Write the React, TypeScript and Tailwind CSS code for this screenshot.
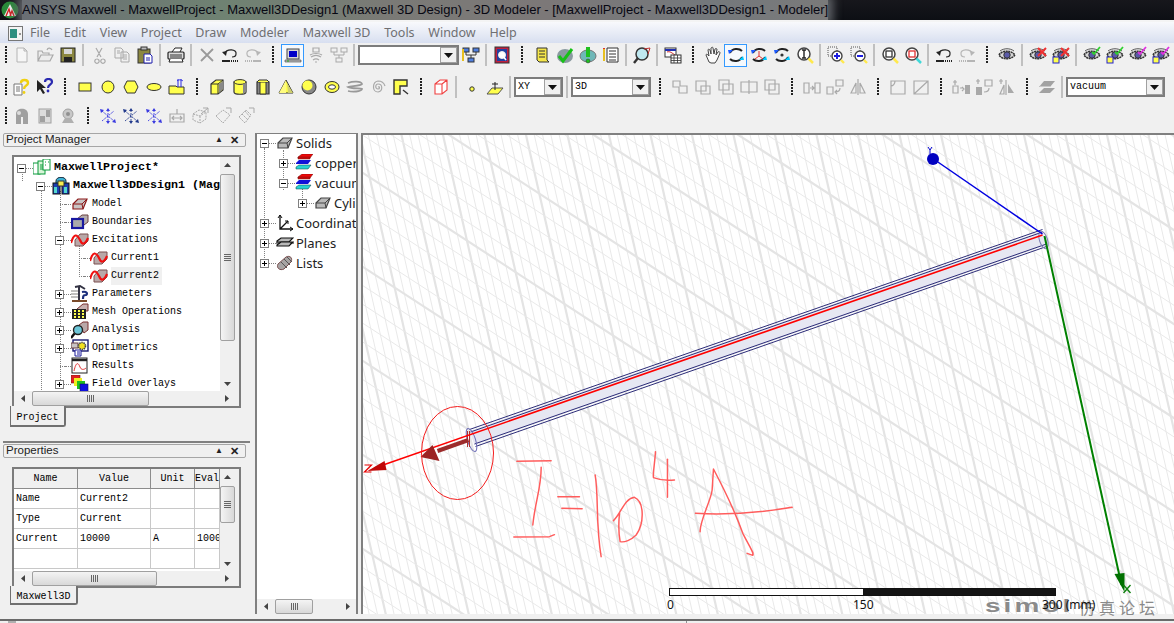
import type { ReactNode } from "react";

const G = "#a9a9a9";
const Y = "#ffff4d";

function Ic({ children, s = 18 }: { children: ReactNode; s?: number }) {
  return (
    <svg width={s} height={s} viewBox="0 0 18 18" fill="none" className="shrink-0">
      {children}
    </svg>
  );
}

const Eye = ({ x = 0 }: { x?: number }) => (
  <g transform={`translate(${x} 0)`}>
    <path d="M1 9 C4 4 13 4 17 9 C13 14 4 14 1 9Z" fill="#d8d8d8" stroke="#333" strokeWidth="1.6" strokeDasharray="2 .6" />
    <circle cx="9" cy="9" r="3.2" fill="#5b5ba8" stroke="#333" />
    <path d="M2 5 C6 2 12 2 16 5" stroke="#555" />
  </g>
);
const Rot = ({ head = "#00c8ff", mid }: { head?: string; mid?: ReactNode }) => (
  <>
    <path d="M3 7 C5 2 12 2 15 5" stroke="#222" strokeWidth="2" />
    <path d="M15 11 C13 16 6 16 3 13" stroke="#222" strokeWidth="2" />
    <path d="M1 4 L6 4 L2 8Z" fill="#1c5bff" />
    <path d="M17 14 L12 14 L16 10Z" fill={head} />
    {mid}
  </>
);
const Mag = ({ inner, handle = "#ffe94d" }: { inner: ReactNode; handle?: string }) => (
  <>
    <circle cx="8" cy="8" r="6" fill="#fff" stroke="#444" strokeWidth="1.5" />
    {inner}
    <path d="M12.5 12.5 L17 17" stroke={handle} strokeWidth="2.5" />
  </>
);
const Dot = () => <rect x="1" y="1" width="9" height="9" stroke="#555" strokeDasharray="1 1" />;
const Check = ({ c }: { c: string }) => <path d="M9 6 L11 8 L17 1" stroke={c} strokeWidth="1.8" />;
const MiniBox = () => <rect x="1" y="11" width="6" height="6" fill={Y} stroke="#2222cc" />;
const Xr = () => <path d="M9 2 L17 10 M17 2 L9 10" stroke="#f03030" strokeWidth="2" />;
const Undo = ({ c, flip }: { c: string; flip?: boolean }) => (
  <g transform={flip ? "translate(18 0) scale(-1 1)" : undefined}>
    <path d="M3 8 C6 2 16 3 15 8 C15 10 13 11 11 11" stroke={c} strokeWidth="1.2" />
    <path d="M1 6 L6 5 L5 10Z" fill={c} />
    <path d="M1 15 H9" stroke={c} strokeWidth="2" />
    <path d="M10 15 H17" stroke={c} strokeWidth="2" strokeDasharray="1 1" />
  </g>
);
const Hier = ({ c, fill }: { c: string; fill: string }) => (
  <>
    <rect x="1" y="2" width="6" height="4" fill={fill} stroke={c} />
    <rect x="11" y="2" width="6" height="4" fill={fill} stroke={c} />
    <rect x="6" y="12" width="6" height="4" fill={fill} stroke={c} />
    <path d="M4 6 V9 H14 V6 M9 9 V12" stroke={c} />
  </>
);
const GSq = ({ d }: { d: string }) => <path d={d} stroke={G} strokeWidth="1.2" fill="none" />;
const Arrows = ({ c = "#3a3ae0" }: { c?: string }) => (
  <>
    <path d="M3 4 L15 14 M9 3 V15 M3 14 L15 4" stroke={c} strokeWidth=".9" strokeDasharray="2 1" />
    <path d="M1 2 L5 3 L2 6Z M17 16 L13 15 L16 12Z M9 1 L11 4 H7Z M9 17 L11 14 H7Z" fill={c} />
  </>
);
const GBox = () => <path d="M2 7 L8 3 L15 5 V12 L9 16 L2 13Z M2 7 L9 9 L15 5 M9 9 V16" stroke={G} strokeDasharray="2 1" />;

const TOOL: Record<string, ReactNode> = {
  new: <path d="M4 2 H11 L14 5 V16 H4Z M11 2 V5 H14" stroke="#b4b4b4" fill="#f6f6f6" />,
  open: <path d="M2 15 V5 H6 L7 7 H13 V9 M2 15 L5 9 H17 L14 15Z M11 4 C12 1 15 2 16 4" stroke={G} strokeWidth="1.2" fill="#ececec" />,
  save: (
    <>
      <rect x="2" y="2" width="14" height="14" fill="#8b8740" stroke="#222" />
      <rect x="5" y="3" width="8" height="5" fill="#d8d8d8" />
      <rect x="5" y="11" width="8" height="5" fill="#222" />
    </>
  ),
  cut: <path d="M6 2 L11 11 M12 2 L7 11 M7 13 A2.2 2.2 0 1 1 6.9 13 M13 13 A2.2 2.2 0 1 1 12.9 13" stroke={G} strokeWidth="1.2" />,
  copy: <path d="M2 2 H8 L10 4 V12 H2Z M8 6 H14 L16 8 V16 H8Z M4 5 H7 M4 7 H7 M10 9 H14 M10 11 H14 M10 13 H14" stroke={G} fill="#f0f0f0" />,
  paste: (
    <>
      <rect x="2" y="3" width="12" height="14" fill="#8b8740" stroke="#333" />
      <rect x="5" y="1" width="6" height="3" fill="#bbb" stroke="#333" />
      <path d="M8 8 H14 L16 10 V17 H8Z" fill="#fff" stroke="#1f1fb0" />
      <path d="M10 12 H14 M10 14 H14" stroke="#1f1fb0" />
    </>
  ),
  print: (
    <>
      <path d="M5 6 L8 2 H15 L13 6" fill="#fff" stroke="#222" />
      <rect x="1" y="6" width="16" height="7" rx="1" fill="#ddd" stroke="#222" strokeWidth="1.2" />
      <path d="M3 9 H15 M3 11 H15" stroke="#333" />
      <path d="M3 13 L2 16 H16 L15 13" fill="#fff" stroke="#222" />
    </>
  ),
  del: <path d="M3 3 L15 15 M15 3 L3 15" stroke="#9a9a9a" strokeWidth="1.8" />,
  undo: <Undo c="#222" />,
  redo: <Undo c="#b5b5b5" flip />,
  monitor: (
    <>
      <rect x="3" y="3" width="12" height="10" fill="#d8d8d8" stroke="#444" />
      <rect x="5" y="5" width="8" height="6" fill="#0000c8" />
      <path d="M1 14 H17 V16 H1Z" fill="#bbb" stroke="#444" strokeWidth=".6" />
      <path d="M3 15 H5" stroke="#22aa22" />
    </>
  ),
  stack: <path d="M6 2 H12 V6 H6Z M3 9 C6 7 12 7 15 9 M4 11 C7 9 11 9 14 11 M6 14 C8 12.5 10 12.5 12 14 M8 16 H10" stroke={G} strokeWidth="1.2" />,
  hierG: <Hier c={G} fill="#f0f0f0" />,
  hierC: (
    <>
      <Hier c="#333" fill="#4f7fe0" />
      <path d="M1 3 V15" stroke="#e8c020" strokeWidth="2" />
    </>
  ),
  q: (
    <>
      <rect x="2" y="1" width="14" height="16" fill="#c02040" stroke="#333" />
      <rect x="4" y="3" width="10" height="12" fill="#2040a0" />
      <circle cx="9" cy="9" r="3.5" fill="#fff" stroke="#eee" />
      <path d="M10 10 L13 14" stroke="#fff" strokeWidth="1.5" />
    </>
  ),
  scroll: <path d="M4 2 H14 V14 L16 16 H6 L4 14Z M6 5 H12 M6 8 H12 M6 11 H12" stroke="#333" fill="#f5e64a" />,
  okG: (
    <>
      <ellipse cx="9" cy="10" rx="8" ry="7" fill="#8a9aa0" />
      <path d="M3 10 L7 15 L16 3" stroke="#18c018" strokeWidth="3" />
    </>
  ),
  warn: (
    <>
      <ellipse cx="9" cy="10" rx="8" ry="6" fill="#6fb8b8" stroke="#777" />
      <path d="M9 1 V11" stroke="#20c020" strokeWidth="4" />
      <circle cx="9" cy="15" r="2" fill="#20c020" stroke="#333" strokeWidth=".5" />
    </>
  ),
  docP: (
    <>
      <path d="M5 2 H16 V16 H5Z M7 5 H14 M7 8 H14 M7 11 H14 M7 14 H14" stroke="#333" fill="#fff" />
      <path d="M2 3 V15" stroke="#e8c020" strokeWidth="2" />
      <path d="M2 2 V3" stroke="#e03030" strokeWidth="2" />
    </>
  ),
  magCheck: (
    <>
      <circle cx="9" cy="8" r="6" fill="#bfe8f0" stroke="#333" strokeWidth="1.5" />
      <path d="M5 12 L1 17" stroke="#333" strokeWidth="2.4" />
      <path d="M11 3 L17 2 L15 8" stroke="#c03030" />
    </>
  ),
  sheet: (
    <>
      <rect x="1" y="2" width="11" height="9" fill="#fff" stroke="#333" />
      <path d="M1 4 H12" stroke="#2030b0" strokeWidth="2" />
      <path d="M3 6 C6 5 8 7 11 9" stroke="#d03030" />
      <rect x="7" y="9" width="10" height="8" fill="#fff" stroke="#333" />
      <path d="M7 12 H17 M7 14.5 H17 M10 9 V17 M13.5 9 V17" stroke="#333" strokeWidth=".8" />
    </>
  ),
  hand: <path d="M5 16 L2 9 C2 8 3 8 4 9 L5 10 L4 4 C4 3 5 3 6 4 L7 8 L7 2 C8 1 9 1 9 2 L10 8 L11 3 C12 2 13 3 13 3 L12 9 L14 6 C15 5 16 6 16 7 L13 14 L11 17 H7Z" stroke="#444" fill="#fafafa" />,
  rot: <Rot />,
  rotA: <Rot mid={<path d="M9 5 V10 M9 10 L5 13 M9 10 L13 13" stroke="#e03030" />} />,
  rotB: <Rot mid={<circle cx="9" cy="9" r="1.6" fill="#333" />} />,
  magI: <Mag inner={<path d="M8 4 V12 M6 4 H10 M6 12 H10" stroke="#222" strokeWidth="1.4" />} />,
  zoomIn: (
    <>
      <Dot />
      <circle cx="10" cy="10" r="5" fill="#fff" stroke="#444" strokeWidth="1.4" />
      <path d="M7 10 H13 M10 7 V13" stroke="#1c1ce0" strokeWidth="2" />
      <path d="M14 14 L17 17" stroke="#ffe94d" strokeWidth="2.4" />
    </>
  ),
  zoomOut: (
    <>
      <Dot />
      <circle cx="10" cy="10" r="5" fill="#fff" stroke="#444" strokeWidth="1.4" />
      <path d="M7 10 H13" stroke="#1c1ce0" strokeWidth="2" />
      <path d="M14 14 L17 17" stroke="#ffe94d" strokeWidth="2.4" />
    </>
  ),
  magS: <Mag inner={<rect x="5" y="5" width="6" height="6" stroke="#333" strokeWidth="1.3" />} />,
  magR: <Mag handle="#40d8d8" inner={<rect x="5" y="5" width="6" height="6" stroke="#e03030" strokeWidth="1.3" />} />,
  eye: <Eye />,
  eyeX: (
    <>
      <Eye />
      <Xr />
    </>
  ),
  eyeXB: (
    <>
      <Eye />
      <Xr />
      <MiniBox />
    </>
  ),
  eyeG: (
    <>
      <Eye />
      <Check c="#30d030" />
    </>
  ),
  eyeGB: (
    <>
      <Eye />
      <Check c="#30d030" />
      <MiniBox />
    </>
  ),
  eyeM: (
    <>
      <Eye />
      <Check c="#e030e0" />
    </>
  ),
  eyeMB: (
    <>
      <Eye />
      <Check c="#e030e0" />
      <MiniBox />
    </>
  ),
  help: (
    <>
      <path d="M1 6 H9 V17 H1Z M3 9 H7 M3 11 H7 M3 13 H7" stroke="#777" fill="#fff" />
      <path d="M8 5 C8 1 15 1 15 5 C15 8 11 7 11 11" stroke="#f0d010" strokeWidth="2.4" />
      <circle cx="11" cy="14.5" r="1.4" fill="#f0d010" />
    </>
  ),
  whats: (
    <>
      <path d="M1 2 V14 L4 11 L7 16 L9 15 L6 10 H10Z" fill="#222" />
      <path d="M9 4 C9 0 16 0 16 4 C16 7 12 6 12 10" stroke="#2a2ab0" strokeWidth="2.2" />
      <circle cx="12" cy="13" r="1.4" fill="#2a2ab0" />
    </>
  ),
  rect: <rect x="3" y="5" width="12" height="8" fill={Y} stroke="#333" />,
  circle: <circle cx="9" cy="9" r="6" fill={Y} stroke="#333" />,
  hex: <path d="M5 3 H13 L16 9 L13 15 H5 L2 9Z" fill={Y} stroke="#333" />,
  ellipse: <ellipse cx="9" cy="9" rx="7" ry="3.5" fill={Y} stroke="#333" />,
  text: (
    <>
      <path d="M1 8 H8 L9 9 H16 V16 H1Z" fill={Y} stroke="#333" />
      <path d="M10 1 V9 M13 1 V9 M9 3 C11 1 14 2 15 3" stroke="#2a2ae0" />
    </>
  ),
  box: (
    <>
      <path d="M3 6 L8 2 H15 V12 L10 16 H3Z" fill={Y} stroke="#333" strokeWidth="1.2" />
      <path d="M3 6 H10 V16 M10 6 L15 2" stroke="#333" />
      <path d="M11 6 L15 3 V11 L11 15Z" fill="#888" />
    </>
  ),
  cyl: (
    <>
      <path d="M3 4 V14 C3 17 15 17 15 14 V4Z" fill={Y} stroke="#333" strokeWidth="1.2" />
      <ellipse cx="9" cy="4" rx="6" ry="2.4" fill={Y} stroke="#333" />
      <path d="M12 6 V16 L15 14 V5Z" fill="#888" />
    </>
  ),
  prism: (
    <>
      <path d="M3 4 H15 V16 H3Z" fill="#888" stroke="#333" strokeWidth="1.2" />
      <path d="M6 4 H12 V16 H6Z" fill={Y} stroke="#333" />
      <path d="M3 4 L5 2 H13 L15 4" fill={Y} stroke="#333" />
    </>
  ),
  cone: (
    <>
      <path d="M9 2 L2 15 H16Z" fill={Y} stroke="#333" />
      <path d="M9 2 L2 15 H9Z" fill="#fffc80" />
      <path d="M10 5 L16 15 H11Z" fill="#cfcf70" />
    </>
  ),
  sphere: (
    <>
      <circle cx="9" cy="9" r="7" fill="#888" stroke="#333" />
      <circle cx="7.5" cy="7.5" r="5" fill={Y} />
    </>
  ),
  torus: (
    <>
      <ellipse cx="9" cy="9" rx="7" ry="5.5" fill={Y} stroke="#333" />
      <ellipse cx="9" cy="9" rx="3.5" ry="2.2" fill="#fff" stroke="#333" />
    </>
  ),
  helix: <path d="M2 5 C7 3 15 3 16 6 C15 8 5 8 2 9 C5 11 15 10 16 11 C15 14 6 14 2 13" stroke="#999" strokeWidth="1.8" />,
  spiral: <path d="M9 9 C11 8 11 11 9 11 C6 11 6 6 9 6 C14 6 14 13 9 14 C3 14 3 4 9 3 C13 3 15 5 16 8" stroke={G} strokeWidth="1.2" />,
  bond: (
    <>
      <path d="M2 2 H15 V8 H8 V16 H2Z" fill={Y} stroke="#333" strokeWidth="1.4" />
      <path d="M11 12 L16 16" stroke="#333" strokeWidth="1.4" />
    </>
  ),
  rbox: <path d="M3 6 L8 2 H15 V12 L10 16 H3Z M3 6 H10 V16 M10 6 L15 2" stroke="#f04040" strokeWidth="1.1" fill="#fff" />,
  point: <circle cx="9" cy="11" r="2.2" fill={Y} stroke="#333" />,
  plane: (
    <>
      <path d="M6 10 H17 L12 16 H1Z" fill={Y} stroke="#555" />
      <path d="M9 4 V12 M6 6 H12" stroke="#222" />
    </>
  ),
  uni: <GSq d="M2 3 H9 V8 H16 V15 H8 V9 H2Z" />,
  sub: <GSq d="M2 3 H12 V13 H2Z M7 8 H16 V16 H7Z" />,
  int: <GSq d="M2 2 H12 V12 H2Z M6 6 H16 V16 H6Z M6 6 H12 V12 H6Z" />,
  split: <GSq d="M1 4 H17 V14 H1Z M9 2 V16" />,
  imp: <GSq d="M2 2 H12 V12 H2Z M6 6 H16 V16 H6Z" />,
  along: <GSq d="M1 5 H6 V15 H1Z M12 5 H17 V15 H12Z M7 10 H11 M9 8 L11 10 L9 12" />,
  around: <GSq d="M1 9 H7 V16 H1Z M10 2 H17 V8 H10Z M14 10 C14 13 12 14 9 14 M11 12 L9 14 L11 16" />,
  mirror: <GSq d="M9 1 V17 M2 15 L7 5 V15Z M11 5 L16 15 H11Z" />,
  chamfer: <GSq d="M2 3 H16 V16 H2Z M2 8 C4 8 6 6 6 3" />,
  chamfer2: <GSq d="M2 3 H16 V16 H2Z M2 16 L16 3" />,
  dupA: (
    <>
      <GSq d="M3 2 V7 M1 4 H5 M8 10 H11 M10 9 L12 11 L10 13 M1 8 H6 V15 H1Z" />
      <rect x="13" y="7" width="5" height="9" fill={G} />
    </>
  ),
  dupB: (
    <>
      <GSq d="M3 1 V6 M1 3 H5 M10 2 H17 V8 H10Z M14 10 C14 13 12 14 9 14" />
      <rect x="1" y="9" width="6" height="8" fill={G} />
    </>
  ),
  dupC: (
    <>
      <GSq d="M3 1 V6 M1 3 H5 M8 2 V17 M2 16 L6 7 V16Z" />
      <path d="M10 6 L16 15 H10Z" fill={G} />
    </>
  ),
  sweep: (
    <>
      <path d="M1 9 L6 3 H17 L12 9Z" fill="#a2a2a2" />
      <path d="M1 15 L6 10 H17 L12 15Z" fill="#a2a2a2" />
      <path d="M2 9 H12" stroke="#eee" />
    </>
  ),
  a1: (
    <>
      <path d="M3 17 V7 C3 0 15 0 15 7 V17 H10 V10 H8 V17Z" fill="#a0a0a0" />
      <circle cx="6" cy="6" r="2" fill="#dcdcdc" />
    </>
  ),
  a2: (
    <>
      <rect x="3" y="2" width="12" height="14" fill="#dcdcdc" stroke="#a0a0a0" />
      <rect x="4" y="9" width="5" height="6" fill="#a0a0a0" />
      <rect x="10" y="3" width="4" height="7" fill="#a0a0a0" />
    </>
  ),
  a3: (
    <>
      <circle cx="9" cy="7" r="5" fill="#c8c8c8" stroke="#a0a0a0" />
      <circle cx="9" cy="7" r="2" fill="#909090" />
      <path d="M3 16 H15 L12 11 H6Z" fill="#b0b0b0" />
    </>
  ),
  b1: <Arrows />,
  b2: <Arrows c="#223a8c" />,
  b3: <Arrows c="#3a3ae0" />,
  b4: <GSq d="M2 7 H16 V15 H2Z M4 11 H14 M6 9 L4 11 L6 13 M12 9 L14 11 L12 13 M9 2 V7" />,
  b5: (
    <>
      <GBox />
      <path d="M12 1 L17 1 L17 6 M10 7 L17 1" stroke={G} />
    </>
  ),
  b6: (
    <>
      <path d="M2 9 L9 3 L16 8 L9 16Z" stroke={G} strokeDasharray="2 1" />
      <path d="M12 1 L17 1 L17 6" stroke={G} />
    </>
  ),
  b7: (
    <>
      <path d="M2 10 L9 3 L14 8 L8 16Z M5 7 L11 13 M8 4 L13 10" stroke={G} strokeDasharray="2 1" />
      <path d="M12 1 L17 1 L17 6" stroke={G} />
    </>
  ),
};

type Item = string | { sel: string; w: string };

const ROW1: Item[] = [
  "F", "new", "open", "save", "|", "cut", "copy", "paste", "|", "print", "|", "del", "undo", "redo", "#", "*monitor", "stack", "hierG", "|",
  { sel: "", w: "w-[101px]" },
  "hierC", "|", "q", "#", "scroll", "okG", "warn", "docP", "|", "magCheck", "|", "sheet", "#", "hand", "*rot", "rotA", "rotB", "magI", "|",
  "zoomIn", "zoomOut", "|", "magS", "magR", "|", "undo", "redo", "#", "eye", "|", "eyeX", "eyeXB", "|", "eyeG", "eyeGB", "eyeM", "eyeMB",
];
const ROW2: Item[] = [
  "F", "help", "whats", "#", "rect", "circle", "hex", "ellipse", "text", "#", "box", "cyl", "prism", "cone", "sphere", "torus", "helix", "spiral", "bond", "#",
  "rbox", "|", "point", "plane", "|",
  { sel: "XY", w: "w-[49px]" },
  "|",
  { sel: "3D", w: "w-[80px]" },
  "#", "uni", "sub", "int", "split", "imp", "#", "along", "around", "mirror", "#", "chamfer", "chamfer2", "#", "dupA", "dupB", "dupC", "#", "sweep", "|",
  { sel: "vacuum", w: "w-[99px]" },
];
const ROW3: Item[] = ["F", "a1", "a2", "a3", "#", "b1", "b2", "b3", "b4", "b5", "b6", "b7"];

function Grip() {
  return <div className="h-[18px] w-[2px] bg-[repeating-linear-gradient(#222_0_2px,transparent_2px_3px)]" />;
}

function Select({ value, w }: { value: string; w: string }) {
  return (
    <div className={`${w} flex h-[20px] shrink-0 items-center`}>
      <div className="flex h-full w-[98%] min-w-0 flex-1 items-center border-2 border-[#7c7c7c] bg-white">
        <span className="flex-1 pl-[2px] font-['Liberation_Mono',monospace] text-[10px] leading-none text-black">{value}</span>
        <span className="flex h-[16px] w-[17px] items-center justify-center border border-[#a0a0a0] bg-[#f0f0f0]">
          <svg width="9" height="5" viewBox="0 0 9 5">
            <path d="M0 0 H9 L4.5 5Z" fill="#111" />
          </svg>
        </span>
      </div>
    </div>
  );
}

function ToolRow({ items }: { items: Item[] }) {
  return (
    <div className="flex h-[24px] items-center pl-px">
      {items.map((it, i) => {
        if (typeof it !== "string") return <Select key={i} value={it.sel} w={it.w} />;
        if (it === "F")
          return (
            <div key={i} className="flex w-[9px] justify-center">
              <Grip />
            </div>
          );
        if (it === "#")
          return (
            <div key={i} className="flex w-[17px] justify-center">
              <Grip />
            </div>
          );
        if (it === "|")
          return (
            <div key={i} className="flex w-[8px] justify-center">
              <div className="h-[22px] w-[2px] bg-[#c0c0c0]" />
            </div>
          );
        const active = it.startsWith("*");
        const name = active ? it.slice(1) : it;
        return (
          <div
            key={i}
            className={
              active
                ? "flex h-[23px] w-[23px] shrink-0 items-center justify-center border border-[#3399ff] bg-[#f5f9fd]"
                : "flex h-[23px] w-[23px] shrink-0 items-center justify-center"
            }
          >
            <Ic>{TOOL[name]}</Ic>
          </div>
        );
      })}
    </div>
  );
}

const BoxIcon = ({ stroke = "#444", fill = "#b9b9b9" }: { stroke?: string; fill?: string }) => (
  <Ic>
    <path d="M2 9 L7 4 H16 L12 14 H2Z" fill={fill} stroke={stroke} strokeWidth="1.2" />
    <path d="M2 9 H11 L12 14 M11 9 L16 4" stroke={stroke} />
  </Ic>
);
const ExcIcon = () => (
  <Ic>
    <path d="M4 9 L9 3 H17 V10 L12 15 H4Z" fill="#b9a8a8" stroke="#7a5050" />
    <path d="M0 12 C3 2 6 3 9 9 C11 14 14 14 17 7" stroke="#f01010" strokeWidth="2.2" />
  </Ic>
);

const TREE: Record<string, ReactNode> = {
  project: (
    <Ic>
      <rect x="0" y="4" width="7" height="11" fill="#fff" stroke="#0a9a3a" />
      <rect x="5" y="2" width="7" height="13" fill="#d8f5d8" stroke="#0a9a3a" />
      <rect x="10" y="0" width="7" height="11" fill="#fff" stroke="#0a9a3a" />
      <path d="M7 6 H10 M7 8 H10 M7 10 H10 M12 3 H13 M15 3 H16 M12 6 H13" stroke="#0a9a3a" />
    </Ic>
  ),
  design: (
    <Ic>
      <path d="M4 4 C4 -1 14 -1 14 4 V7 H4Z" fill="#3fb3d6" stroke="#123" />
      <rect x="1" y="6" width="7" height="11" fill="#1c3fb0" stroke="#111" />
      <rect x="10" y="6" width="7" height="11" fill="#1c3fb0" stroke="#111" />
      <rect x="6" y="4" width="6" height="5" fill="#f6ee50" stroke="#333" />
      <rect x="2" y="10" width="3" height="6" fill="#52d8d0" />
      <rect x="12" y="10" width="3" height="6" fill="#52d8d0" />
    </Ic>
  ),
  model: <BoxIcon stroke="#8c1818" fill="#c9c4c4" />,
  boundaries: (
    <Ic>
      <path d="M6 6 L11 2 H17 V9 L13 12 H6Z" fill="#b5aeae" stroke="#6a4040" />
      <rect x="1" y="6" width="11" height="9" stroke="#1818a0" strokeWidth="2.2" fill="#aaa" />
    </Ic>
  ),
  exc: <ExcIcon />,
  params: (
    <Ic>
      <path d="M4 2 L9 1 L14 4 M8 2 V17" stroke="#334" strokeWidth="2" />
      <path d="M0 6 H7 M0 9 H7 M0 12 H7" stroke="#aaa" strokeWidth="1.6" />
      <path d="M11 7 C16 6 17 9 15 10 C13 10 12 10 12 14" stroke="#1b2f7c" strokeWidth="2.2" />
      <path d="M1 16 H16" stroke="#7a4a2a" strokeWidth="2" />
    </Ic>
  ),
  mesh: (
    <Ic>
      <path d="M6 6 L12 1 H17 V8 H14" stroke="#7a3030" fill="#c8b0b0" />
      <rect x="1" y="6" width="14" height="10" fill="#222" />
      <path d="M3 8 H5 M7 8 H9 M11 8 H13 M3 11 H5 M7 11 H9 M11 11 H13 M3 14 H5 M7 14 H9 M11 14 H13" stroke={Y} strokeWidth="2" />
    </Ic>
  ),
  analysis: (
    <Ic>
      <path d="M8 4 L12 1 H17 V9 L13 12Z" fill="#b9a8a8" stroke="#7a3030" />
      <circle cx="7" cy="9" r="4.5" fill="#6cc6d8" stroke="#222" strokeWidth="1.4" />
      <path d="M3.5 12.5 L0 17" stroke="#111" strokeWidth="2.4" />
    </Ic>
  ),
  opti: (
    <Ic>
      <rect x="2" y="1" width="15" height="11" fill="#fff" stroke="#1a1a70" strokeWidth="1.4" />
      <rect x="0" y="4" width="7" height="5" fill="#c9c4c4" stroke="#6a4040" />
      <circle cx="11" cy="7" r="3.5" fill="#f2e020" stroke="#444" strokeWidth="1.6" strokeDasharray="1.4 .8" />
      <path d="M4 11 H10 V17 H4Z" fill="#fff" stroke="#1a1a9a" />
      <path d="M6 13 H9 M6 15 H9" stroke="#1a1a9a" />
    </Ic>
  ),
  results: (
    <Ic>
      <rect x="1" y="1" width="15" height="15" fill="#fff" stroke="#222" />
      <path d="M1 3 H16" stroke="#222" strokeWidth="2.4" />
      <path d="M3 14 C5 5 7 5 9 10 C10 13 13 13 15 11" stroke="#e03030" />
    </Ic>
  ),
  overlays: (
    <Ic>
      <rect x="0" y="0" width="9" height="8" fill="#e02020" stroke="#6a2020" strokeWidth=".6" />
      <rect x="3" y="3" width="8" height="8" fill="#f0f020" />
      <rect x="6" y="6" width="8" height="8" fill="#20c020" />
      <rect x="9" y="9" width="8" height="9" fill="#1010e0" stroke="#101060" strokeWidth=".6" />
    </Ic>
  ),
  solid: <BoxIcon />,
  material: (
    <Ic>
      <path d="M3 3 L7 0 H18 L15 4 H3Z M3 3 H15 V5 H3Z" fill="#ee0808" stroke="#701010" strokeWidth=".5" />
      <path d="M1 9 L4 6 H16 L13 10 H1Z" fill="#1212d8" />
      <path d="M1 13 L4 11 H16 L13 15 H1Z" fill="#28d2d2" stroke="#064040" strokeWidth=".5" />
    </Ic>
  ),
  coords: (
    <Ic>
      <path d="M4 1 V15 H17 M4 15 L12 7" stroke="#111" strokeWidth="1.3" />
      <path d="M2 4 L4 1 L6 4 M14 13 L17 15 L14 17 M9 7 L12 7 L12 10" stroke="#111" />
    </Ic>
  ),
  planes: (
    <Ic>
      <path d="M1 7 L5 4 H17 L13 8 H1Z" fill="#b9b9b9" stroke="#111" strokeWidth="1.2" />
      <path d="M1 11 L5 8 H17 L13 12 H1Z" fill="#b9b9b9" stroke="#111" strokeWidth="1.2" />
      <path d="M0 9 H4 M14 9 H18" stroke="#111" />
    </Ic>
  ),
  lists: (
    <Ic>
      <path d="M2 10 L10 3 C14 1 17 4 15 8 L8 15 C4 17 0 14 2 10Z" fill="#a8a4a4" stroke="#7a5050" />
      <path d="M5 8 L11 14 M8 5 L14 11 M11 3 L16 8" stroke="#555" />
    </Ic>
  ),
};

const LEVEL = ["ml-[3px]", "ml-[22px]", "ml-[41px]", "ml-[60px]"];

type Node = { level: number; label: string; icon: string; exp?: "+" | "-"; bold?: boolean; selected?: boolean };

const PROJECT: Node[] = [
  { level: 0, label: "MaxwellProject*", icon: "project", exp: "-", bold: true },
  { level: 1, label: "Maxwell3DDesign1 (Magnetostatic)", icon: "design", exp: "-", bold: true },
  { level: 2, label: "Model", icon: "model" },
  { level: 2, label: "Boundaries", icon: "boundaries" },
  { level: 2, label: "Excitations", icon: "exc", exp: "-" },
  { level: 3, label: "Current1", icon: "exc" },
  { level: 3, label: "Current2", icon: "exc", selected: true },
  { level: 2, label: "Parameters", icon: "params", exp: "+" },
  { level: 2, label: "Mesh Operations", icon: "mesh", exp: "+" },
  { level: 2, label: "Analysis", icon: "analysis", exp: "+" },
  { level: 2, label: "Optimetrics", icon: "opti", exp: "+" },
  { level: 2, label: "Results", icon: "results" },
  { level: 2, label: "Field Overlays", icon: "overlays", exp: "+" },
];

const SOLIDS: Node[] = [
  { level: 0, label: "Solids", icon: "solid", exp: "-" },
  { level: 1, label: "copper", icon: "material", exp: "+" },
  { level: 1, label: "vacuum", icon: "material", exp: "-" },
  { level: 2, label: "Cylinder1", icon: "solid", exp: "+" },
  { level: 0, label: "Coordinate Systems", icon: "coords", exp: "+" },
  { level: 0, label: "Planes", icon: "planes", exp: "+" },
  { level: 0, label: "Lists", icon: "lists", exp: "+" },
];

function Expander({ kind }: { kind: "+" | "-" }) {
  return (
    <svg width="9" height="9" viewBox="0 0 9 9" className="shrink-0">
      <rect x=".5" y=".5" width="8" height="8" fill="#fff" stroke="#808080" />
      <path d="M2 4.5 H7" stroke="#000" />
      {kind === "+" && <path d="M4.5 2 V7" stroke="#000" />}
    </svg>
  );
}

function TreeRow({ node, height, text }: { node: Node; height: string; text: string }) {
  return (
    <div className={`${height} flex shrink-0 items-center whitespace-pre`}>
      <div className={`${LEVEL[node.level]} flex w-[16px] shrink-0 items-center`}>
        {node.exp ? (
          <Expander kind={node.exp} />
        ) : (
          <div className="ml-[5px] w-[5px] border-t border-dotted border-[#808080]" />
        )}
        <div className={node.exp ? "w-[7px] border-t border-dotted border-[#808080]" : "w-[6px] border-t border-dotted border-[#808080]"} />
      </div>
      <div className="relative z-10 shrink-0">{TREE[node.icon]}</div>
      <span
        className={`${text} ml-[3px] flex h-full items-center ${node.selected ? "bg-[#f0f0f0] pr-[3px]" : ""} ${
          node.bold ? "text-[11.67px] font-bold" : ""
        }`}
      >
        {node.label}
      </span>
    </div>
  );
}

const Tri = ({ d }: { d: string }) => (
  <svg width="7" height="7" viewBox="0 0 7 7">
    <path d={d} fill="#444" />
  </svg>
);

function VScroll({ thumb }: { thumb: string }) {
  return (
    <div className="flex w-[15px] shrink-0 flex-col items-center bg-[#f0f0f0]">
      <div className="flex h-[17px] shrink-0 items-center">
        <Tri d="M0 5 L3.5 1 L7 5Z" />
      </div>
      <div className="flex-1 self-stretch">
        <div className={`${thumb} flex items-center justify-center rounded-[2px] border border-[#a0a0a0] bg-[linear-gradient(90deg,#f4f4f4,#d8d8d8)]`}>
          <div className="h-[7px] w-[7px] bg-[repeating-linear-gradient(#666_0_1px,transparent_1px_2px)]" />
        </div>
      </div>
      <div className="flex h-[15px] shrink-0 items-center">
        <Tri d="M0 2 H7 L3.5 6Z" />
      </div>
    </div>
  );
}

function HScroll({ thumb, right }: { thumb: string; right?: string }) {
  return (
    <div className={`${right ?? ""} flex h-[15px] shrink-0 items-center bg-[#f0f0f0]`}>
      <div className="flex w-[18px] shrink-0 justify-center">
        <Tri d="M5 0 V7 L1 3.5Z" />
      </div>
      <div className="min-w-0 flex-1">
        <div className={`${thumb} flex h-[15px] items-center justify-center rounded-[2px] border border-[#a0a0a0] bg-[linear-gradient(#f4f4f4,#d8d8d8)]`}>
          <div className="h-[7px] w-[7px] bg-[repeating-linear-gradient(90deg,#666_0_1px,transparent_1px_2px)]" />
        </div>
      </div>
      <div className="flex w-[18px] shrink-0 justify-center">
        <Tri d="M2 0 V7 L6 3.5Z" />
      </div>
    </div>
  );
}

function PanelHead({ title }: { title: string }) {
  return (
    <div className="ml-[3px] flex h-[14px] w-[243px] shrink-0 items-center rounded-[2px] border border-[#a6a6a6] bg-[#f0f0f0] pl-[2px] pr-[6px] font-['Liberation_Sans',sans-serif] text-[11.5px] leading-none text-[#222]">
      <span className="flex-1">{title}</span>
      <span className="mr-[7px] text-[8px]">▲</span>
      <span className="text-[11px] font-bold">✕</span>
    </div>
  );
}

function Tab({ label, w, h }: { label: string; w: string; h: string }) {
  return (
    <div className={`${w} ${h} relative z-10 ml-[10px] -mt-[2px] flex shrink-0 items-center justify-center rounded-br-[3px] border-b-2 border-l border-r-2 border-[#707070] bg-[#f0f0f0] pt-[4px] font-['Liberation_Mono',monospace] text-[10px] text-black`}>
      {label}
    </div>
  );
}

const TABLE = [
  ["Name", "Current2", "", ""],
  ["Type", "Current", "", ""],
  ["Current", "10000", "A", "10000"],
  ["", "", "", ""],
];
const COLS = ["w-[64px]", "w-[73px]", "w-[44px]", "w-[25px]"];

function PropsTable() {
  return (
    <div className="flex-1 overflow-hidden bg-white font-['Liberation_Mono',monospace] text-[10px] text-black">
      <div className="flex h-[20px] bg-[#f0f0f0]">
        {["Name", "Value", "Unit", "Eval"].map((h, i) => (
          <div key={h} className={`${COLS[i]} flex shrink-0 items-center justify-center overflow-hidden border-b border-r border-[#8c8c8c]`}>
            {h}
          </div>
        ))}
      </div>
      {TABLE.map((row, r) => (
        <div key={r} className="flex h-[20px]">
          {row.map((c, i) => (
            <div key={i} className={`${COLS[i]} flex shrink-0 items-center overflow-hidden whitespace-nowrap border-b border-r border-[#c8c8c8] pl-[2px]`}>
              {c}
            </div>
          ))}
        </div>
      ))}
    </div>
  );
}

function Viewport() {
  const thin: ReactNode[] = [];
  for (let i = -25; i < 110; i++) {
    const x = 402 + i * 8.3;
    const major = i % 5 === 0;
    thin.push(
      <line key={"s" + i} x1={x - 0.227 * 10} y1={125} x2={x + 0.227 * 490} y2={625} stroke={major ? "#e4e4e4" : "#e9e9e9"} strokeWidth={major ? 2.2 : 1} />
    );
  }
  for (let i = -50; i < 30; i++) {
    const y = 172 + i * 18.8;
    const major = i % 5 === 0;
    thin.push(
      <line key={"f" + i} x1={362} y1={y} x2={1180} y2={y + 0.65 * 818} stroke={major ? "#e4e4e4" : "#e9e9e9"} strokeWidth={major ? 2.2 : 1} />
    );
  }
  return (
    <svg width="100%" height="100%" viewBox="364 135 810 479" className="block bg-white">
      {thin}
      {/* cylinder */}
      <path d="M470 431 L1043 231 L1047 245 L475 445Z" fill="#e6e7f2" />
      <path d="M470 429.5 L1043 229.5 M471 432 L1043 232" stroke="#2c2c78" strokeWidth="1" />
      <path d="M475 444 L1047 244 M476 446.5 L1047 246.5" stroke="#2c2c78" strokeWidth="1" />
      <ellipse cx="1044" cy="240" rx="4" ry="9" fill="none" stroke="#8080b8" transform="rotate(-18 1044 240)" />
      <ellipse cx="472" cy="440" rx="4" ry="12" fill="none" stroke="#7070b8" transform="rotate(-18 472 440)" />
      <path d="M468 431 V447 M470 431 V447" stroke="#b03030" strokeWidth="1" />
      {/* axes */}
      <path d="M1043 235 L375 468" stroke="#ff0000" strokeWidth="1.6" />
      <path d="M368 471 L385 461 L387 470Z" fill="#c00808" />
      <path d="M1043 234 L934 159" stroke="#0000e0" strokeWidth="1.5" />
      <circle cx="933.5" cy="159" r="6" fill="#0000c0" />
      <path d="M928.5 147 L930.5 150 L932.5 147 M930.5 150 V154" stroke="#0000d0" fill="none" />
      <path d="M1045 236 L1122 585" stroke="#008000" strokeWidth="2" />
      <path d="M1115 574 L1125 573 L1125 592Z" fill="#007000" />
      <path d="M1124 585 L1131 593 M1131 585 L1124 593" stroke="#108010" strokeWidth="1.4" />
      <path d="M365 465 H372 L365 472 H372" stroke="#e80000" strokeWidth="1.2" fill="none" />
      {/* current arrow */}
      <path d="M469 440 L438 451" stroke="#9c2c2c" strokeWidth="4" />
      <path d="M421 457 L433 445 L440 461Z" fill="#9c2222" />
      {/* handwriting */}
      <ellipse cx="458" cy="453" rx="36" ry="46.5" fill="none" stroke="#f41c1c" strokeWidth="1" />
      <g transform="translate(360 390) scale(0.3333)" stroke="#ff5c5c" strokeWidth="4.4" fill="none" strokeLinecap="round" strokeLinejoin="round">
        <path d="M472 214 L575 212" />
        <path d="M545 232 C546 290 526 340 520 405" />
        <path d="M463 441 L570 440 L585 434" />
        <path d="M595 320 H660" />
        <path d="M607 355 L668 356" />
        <path d="M707 255 C718 320 708 400 725 500" />
        <path d="M762 392 C785 370 795 325 825 322 C855 335 855 400 830 435 C815 450 795 458 782 455 C775 420 778 395 780 370" />
        <path d="M888 185 C886 220 880 250 882 263 C900 270 925 272 945 270" />
        <path d="M924 208 V322" />
        <path d="M1022 425 C1020 395 1055 330 1058 300 L1062 237 C1090 290 1125 360 1150 430 C1170 470 1185 490 1180 496 L1163 490" />
        <path d="M1008 370 C1080 374 1180 372 1298 352" />
      </g>
    </svg>
  );
}

export default function App() {
  return (
    <div className="flex h-[623px] w-[1174px] flex-col overflow-hidden bg-[#f0f0f0]">
      <div className="flex h-[20px] shrink-0 items-center overflow-hidden bg-[linear-gradient(180deg,#17171c,#0d0f14)]">
        <svg width="18" height="18" viewBox="0 0 18 18" className="ml-[1px] shrink-0">
          <circle cx="9" cy="9" r="8.5" fill="#2a8a3a" />
          <path d="M3 15 L9 3 L15 15Z" fill="#f4f4f4" />
          <path d="M5 15 L8 8 L10 15 M9 15 L11 10 L13 15" stroke="#d42020" strokeWidth="1.4" fill="none" />
        </svg>
        <span className="ml-[3px] whitespace-nowrap bg-[linear-gradient(90deg,#6a6e74,#6f8272_25%,#7a7a76_45%,#7c7878_65%,#74787c_85%,#7a7a7a)] font-['Liberation_Sans',sans-serif] text-[13px] leading-[20px] text-[#070712] shadow-[0_0_10px_5px_#606368]">
          ANSYS Maxwell - MaxwellProject - Maxwell3DDesign1 (Maxwell 3D Design) - 3D Modeler - [MaxwellProject - Maxwell3DDesign1 - Modeler]
        </span>
      </div>
      <div className="h-[23px] shrink-0 border-t-2 border-[#f4f4f4] bg-[linear-gradient(180deg,#f8f9fc,#d8dff0)]">
        <div className="flex h-full items-center pl-[8px] pt-px font-['Noto_Sans',sans-serif] text-[12.5px] leading-none text-[#6f6f72]">
          <svg width="15" height="15" viewBox="0 0 15 15" className="mr-[7px] shrink-0">
            <rect x=".5" y=".5" width="14" height="14" fill="#f4f4f4" stroke="#777" />
            <rect x="2" y="3" width="7" height="9" fill="#2f8f80" />
            <path d="M11 8 H13" stroke="#333" />
          </svg>
          <div className="flex gap-[13.7px]">
            {["File", "Edit", "View", "Project", "Draw", "Modeler", "Maxwell 3D", "Tools", "Window", "Help"].map((m) => (
              <span key={m}>{m}</span>
            ))}
          </div>
        </div>
      </div>
      <ToolRow items={ROW1} />
      <div className="mt-[8px]">
        <ToolRow items={ROW2} />
      </div>
      <div className="mt-[5px]">
        <ToolRow items={ROW3} />
      </div>

      <div className="mt-[4px] flex h-[482px] shrink-0 pt-px">
        <aside className="flex w-[250px] shrink-0 flex-col">
          <PanelHead title="Project Manager" />
          <div className="ml-[12px] mt-[8px] flex h-[253px] w-[229px] shrink-0 flex-col border-2 border-[#7c7c7c] pr-[4px]">
            <div className="flex min-h-0 flex-1">
              <div className="relative flex-1 overflow-hidden bg-white">
                <div className="absolute left-[8px] top-[14px] h-[10px] border-l border-dotted border-[#808080]" />
                <div className="absolute left-[27px] top-[32px] h-[205px] border-l border-dotted border-[#808080]" />
                <div className="absolute left-[46px] top-[34px] h-[195px] border-l border-dotted border-[#808080]" />
                <div className="absolute left-[65px] top-[86px] h-[32px] border-l border-dotted border-[#808080]" />
                <div className="relative pt-[2px]">
                  {PROJECT.map((n) => (
                    <TreeRow key={n.label + n.level} node={n} height="h-[18px]" text="font-['Liberation_Mono',monospace] text-[10px] leading-none text-black" />
                  ))}
                </div>
              </div>
              <VScroll thumb="h-[167px]" />
            </div>
            <HScroll thumb="w-[117px]" />
          </div>
          <Tab label="Project" w="w-[56px]" h="h-[21px]" />
          <div className="ml-[3px] mt-[14px] h-[2px] shrink-0 bg-[#808080]" />
          <div className="mt-px">
            <PanelHead title="Properties" />
          </div>
          <div className="ml-[12px] mt-[9px] flex h-[121px] w-[229px] shrink-0 flex-col border-2 border-[#7c7c7c] pr-[4px]">
            <div className="flex min-h-0 flex-1">
              <PropsTable />
              <VScroll thumb="h-[37px]" />
            </div>
            <HScroll thumb="w-[125px]" />
          </div>
          <Tab label="Maxwell3D" w="w-[68px]" h="h-[19px]" />
        </aside>

        <div className="ml-[5px] flex w-[103px] shrink-0 flex-col border-x-2 border-t border-[#808080] bg-white">
          <div className="relative -mt-px min-h-0 flex-1 overflow-hidden">
            <div className="absolute left-[7px] top-[15px] h-[112px] border-l border-dotted border-[#808080]" />
            <div className="absolute left-[26px] top-[17px] h-[40px] border-l border-dotted border-[#808080]" />
            <div className="absolute left-[45px] top-[55px] h-[12px] border-l border-dotted border-[#808080]" />
            <div className="relative">
              {SOLIDS.map((n) => (
                <TreeRow key={n.label} node={n} height="h-[20px]" text="relative -left-px font-['Noto_Sans',sans-serif] text-[13px] leading-none text-[#222]" />
              ))}
            </div>
          </div>
          <HScroll thumb="ml-[0px] w-[38px]" />
        </div>

        <div className="relative ml-[3px] min-w-0 flex-1 border-l-2 border-t-2 border-[#808080] bg-white">
          <Viewport />
          {/* scale bar and watermark sit over the 3D view */}
          <div className="absolute bottom-[18px] left-[306px] flex h-[8px] w-[387px] border border-[#111]">
            <div className="w-1/2 bg-white" />
            <div className="w-1/2 bg-[#141414]" />
          </div>
          <span className="absolute bottom-0 left-[304px] font-['Noto_Sans',sans-serif] text-[12px] text-[#111]">0</span>
          <span className="absolute bottom-0 left-[490px] font-['Noto_Sans',sans-serif] text-[12px] text-[#111]">150</span>
          <span className="absolute bottom-[-1px] left-[622px] origin-left scale-x-[1.55] whitespace-nowrap font-['Liberation_Sans',sans-serif] text-[18px] font-bold leading-none tracking-[2px] text-[#8a8a8a]">
            simol
          </span>
          <span className="absolute bottom-[-1px] left-[716px] whitespace-nowrap font-['Noto_Sans_CJK_SC',sans-serif] text-[16px] leading-none tracking-[4px] text-[#8a8a8a]">
            仿真论坛
          </span>
          <span className="absolute bottom-0 left-[679px] whitespace-nowrap font-['Noto_Sans',sans-serif] text-[12px] text-[#111]">300 (mm)</span>
        </div>
      </div>

      <div className="mt-[5px] h-[2px] shrink-0 bg-[#6a6a6a]" />
      <div className="flex min-h-0 flex-1 bg-[#f0f0f0]">
        <div className="ml-[8px] h-[2px] w-[8px] bg-[#b0b0b0]" />
        <div className="ml-[670px] w-px bg-[#909090]" />
      </div>
    </div>
  );
}
